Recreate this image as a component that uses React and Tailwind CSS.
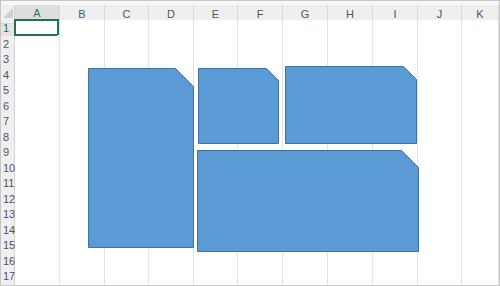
const COLS = [
  { name: 'A', w: 45 },
  { name: 'B', w: 45 },
  { name: 'C', w: 44 },
  { name: 'D', w: 45 },
  { name: 'E', w: 44 },
  { name: 'F', w: 45 },
  { name: 'G', w: 45 },
  { name: 'H', w: 45 },
  { name: 'I', w: 45 },
  { name: 'J', w: 44 },
  { name: 'K', w: 37 },
];

const ROW_H = [16, 15, 16, 15, 16, 15, 16, 15, 16, 15, 16, 15, 16, 15, 16, 15, 16];

// snipped-corner rectangles floating on the sheet (sheet coords, origin at outer edge)
const SHAPES = [
  { x: 88, y: 68, w: 105, h: 179, snip: 18 },
  { x: 198, y: 68, w: 80, h: 75, snip: 12 },
  { x: 285, y: 66, w: 131, h: 77, snip: 13 },
  { x: 197, y: 150, w: 221, h: 101, snip: 17 },
];

function snipPoints({ x, y, w, h, snip }) {
  const pts = [
    [x, y],
    [x + w - snip, y],
    [x + w, y + snip],
    [x + w, y + h],
    [x, y + h],
  ];
  return pts.map(([a, b]) => `${a + 0.5},${b + 0.5}`).join(' ');
}

function App() {
  const template = `14px ${COLS.map(c => c.w + 'px').join(' ')}`;

  return (
    <div className="relative w-[500px] h-[286px] overflow-hidden border border-[#c6c6c6] bg-[#efefef] font-['Liberation_Sans',Arial,sans-serif] text-[11px] text-[#555]">
      <div className="h-[4px] bg-[#f7f7f7]" />

      {/* column headers */}
      <div className="grid h-[15px]" style={{ gridTemplateColumns: template }}>
        <div className="relative border-r border-b border-[#d4d4d4] bg-[#efefef]">
          <svg width="14" height="15" className="absolute inset-0">
            <polygon points="12,3 12,13 2,13" fill="#d0d0d0" />
          </svg>
        </div>
        {COLS.map(c => (
          <div
            key={c.name}
            className={
              c.name === 'A'
                ? 'flex items-center justify-center border-r border-b-2 border-[#d4d4d4] border-b-[#c4c4c4] bg-[#dedede] text-[#3d6b52]'
                : 'flex items-center justify-center border-r border-b border-[#dadada] bg-[#efefef]'
            }
          >
            {c.name}
          </div>
        ))}
      </div>

      {/* rows */}
      {ROW_H.map((h, i) => (
        <div key={i} className="grid" style={{ gridTemplateColumns: template, height: h }}>
          <div
            className={
              i === 0
                ? 'flex items-center pl-[2px] border-r border-b border-[#d4d4d4] bg-[#e4e4e4] text-[#217346]'
                : 'flex items-center pl-[2px] border-r border-b border-[#d4d4d4] bg-[#efefef]'
            }
          >
            {i + 1}
          </div>
          {COLS.map((c, j) => (
            <div key={c.name} className="relative border-r border-b border-[#e3e3e3] bg-white">
              {i === 0 && j === 0 && (
                <>
                  <div className="absolute -left-px -top-px w-[45px] h-[17px] border-2 border-[#217346]" />
                  <div className="absolute -right-[3px] -bottom-[3px] w-[5px] h-[5px] bg-[#217346] border border-white" />
                </>
              )}
            </div>
          ))}
        </div>
      ))}

      {/* floating shapes */}
      <svg width="500" height="286" className="absolute -left-px -top-px pointer-events-none">
        {SHAPES.map((s, i) => (
          <polygon key={i} points={snipPoints(s)} fill="#5b9bd5" stroke="#41719c" strokeWidth="1" />
        ))}
      </svg>
    </div>
  );
}

export default App;
